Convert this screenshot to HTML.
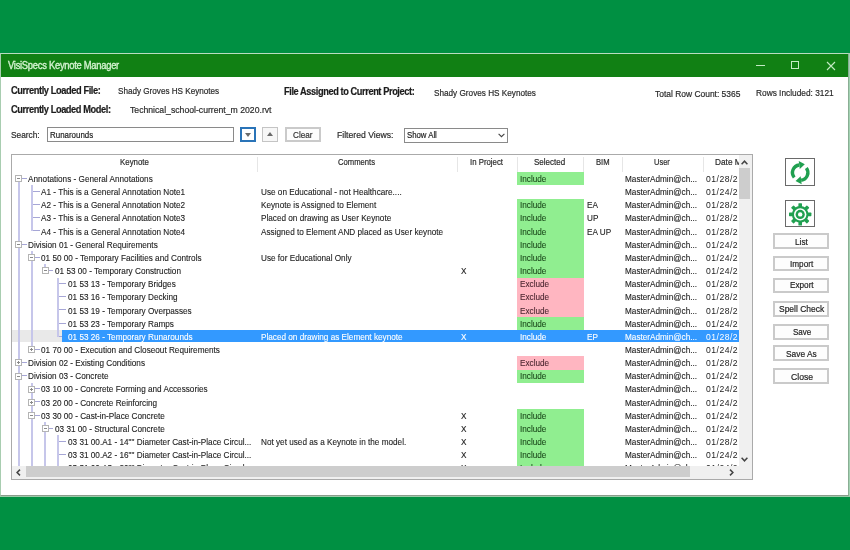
<!DOCTYPE html>
<html><head><meta charset="utf-8">
<style>
html,body{margin:0;padding:0}
body{width:850px;height:550px;overflow:hidden;background:#009042;position:relative;font-family:"Liberation Sans",sans-serif;color:#1a1a1a}
.a{position:absolute}
#win{position:absolute;left:0;top:53px;width:850px;height:443px;background:#fff}
#wb{position:absolute;left:0;top:53px;width:847px;height:441px;border:1px solid #b9dcc0;border-left-color:#a8cdb0;border-right:2px solid #8aae94;border-bottom:1px solid #8a9c8c}
#wb2{position:absolute;left:0;top:496px;width:850px;height:1px;background:#9ccaa8}
#title{position:absolute;left:1px;top:54px;width:847px;height:22.6px;background:#118014}
.tx{position:absolute;white-space:nowrap;line-height:13px;transform-origin:0 0;-webkit-text-stroke:.2px currentColor}
.t{position:absolute;white-space:nowrap;font-size:9.8px;line-height:13.15px;height:13.15px;transform:scaleX(.836);transform-origin:0 0;color:#222;-webkit-text-stroke:.12px currentColor}
.w{color:#fff}
.gi{color:#1c4a1c}
.pe{color:#4a2630}
.dt{transform:scaleX(.88);letter-spacing:.55px;-webkit-text-stroke:0}
.rb{position:absolute;left:12px;width:726.5px;height:12.3px}
.sel{background:linear-gradient(to right,#e9e9e9 0,#e9e9e9 50.2px,#3399ff 50.2px)}
.cb{position:absolute;height:13.2px}
.inc{background:#90ee90}
.exc{background:#ffb6c1}
.vl{position:absolute;width:2px;background:#c6c6ea}
.hl{position:absolute;height:1px;background:#a6a6d6}
.bx{position:absolute;width:7px;height:7px;box-sizing:border-box;border:1px solid #b4b4b4;background:#fff}
.bx .ph{position:absolute;left:1px;top:2px;width:3px;height:1px;background:#8a8a8a}
.bx .pv{position:absolute;left:2px;top:1px;width:1px;height:3px;background:#8a8a8a}
.bb{position:absolute;box-sizing:border-box;border:2px solid #cacaca;background:#fdfdfd}
#root{position:absolute;left:0;top:0;width:850px;height:550px;filter:blur(.3px)}
</style></head><body><div id="root">
<div id="win"></div>
<div id="wb"></div>
<div id="wb2"></div>
<div class="a" style="left:849px;top:53px;width:1px;height:443px;background:#a2d2b2"></div>
<div id="title"></div>
<!-- title buttons -->
<div class="a" style="left:755.5px;top:65px;width:9px;height:1px;background:#c4eac4"></div>
<div class="a" style="left:791px;top:61px;width:8px;height:8px;box-sizing:border-box;border:1px solid #c4eac4"></div>
<svg class="a" style="left:826px;top:61px" width="10" height="10" viewBox="0 0 10 10"><path d="M1 1L9 9M9 1L1 9" stroke="#c4eac4" stroke-width="1.1"/></svg>

<!-- search row controls -->
<div class="a" style="left:47.2px;top:127.2px;width:186.5px;height:15.3px;box-sizing:border-box;border:1px solid #8a8a8a;background:#fff"></div>
<div class="a" style="left:240px;top:127px;width:15.6px;height:15.4px;box-sizing:border-box;border:2px solid #2a74b8;background:#fff"></div>
<div class="a" style="left:244.5px;top:132.5px;width:0;height:0;border-left:3.5px solid transparent;border-right:3.5px solid transparent;border-top:4px solid #6a6a6a"></div>
<div class="a" style="left:262.4px;top:127px;width:15.8px;height:15.4px;box-sizing:border-box;border:1px solid #c4c4c4;background:#f7f7f7"></div>
<div class="a" style="left:266.8px;top:132px;width:0;height:0;border-left:3.5px solid transparent;border-right:3.5px solid transparent;border-bottom:4px solid #6a6a6a"></div>
<div class="bb" style="left:285.4px;top:126.8px;width:35.2px;height:15.7px"></div>
<div class="a" style="left:404.2px;top:127.5px;width:103.6px;height:15.4px;box-sizing:border-box;border:1px solid #8a8a8a;background:#fff"></div>
<svg class="a" style="left:497.5px;top:133.2px" width="7" height="5" viewBox="0 0 7 5"><path d="M0.6 0.8L3.5 3.7L6.4 0.8" fill="none" stroke="#444" stroke-width="1.1"/></svg>

<!-- grid -->
<div class="a" style="left:11px;top:154px;width:742px;height:326px;box-sizing:border-box;border:1px solid #aaaaaa;background:#fff"></div>
<div class="a" style="left:12px;top:155px;width:726.5px;height:310.5px;overflow:hidden">
<div class="a" style="left:-12px;top:-155px;width:850px;height:550px">
<div class="a" style="left:257.1px;top:157px;width:1px;height:15px;background:#e6e6e6"></div>
<div class="a" style="left:457.4px;top:157px;width:1px;height:15px;background:#e6e6e6"></div>
<div class="a" style="left:516.6px;top:157px;width:1px;height:15px;background:#e6e6e6"></div>
<div class="a" style="left:583.1px;top:157px;width:1px;height:15px;background:#e6e6e6"></div>
<div class="a" style="left:621.9px;top:157px;width:1px;height:15px;background:#e6e6e6"></div>
<div class="a" style="left:702.5px;top:157px;width:1px;height:15px;background:#e6e6e6"></div>
<div class="tx" style="left:714.6px;top:156.2px;font-size:9.3px;color:#2a2a2a;transform:scaleX(.89)">Date Modified</div>
<div class="cb inc" style="top:172.30px;left:517.1px;width:66.5px"></div>
<div class="hl" style="left:22px;top:178px;width:5px"></div>
<div class="t" style="left:28.2px;top:172.00px">Annotations - General Annotations</div>
<div class="t gi" style="left:520.2px;top:172.00px">Include</div>
<div class="t" style="left:625px;top:172.00px">MasterAdmin@ch...</div>
<div class="t dt" style="left:706.3px;top:172.00px">01/28/2</div>
<div class="hl" style="left:32px;top:191px;width:8px"></div>
<div class="t" style="left:41.4px;top:185.15px">A1 - This is a General Annotation Note1</div>
<div class="t" style="left:260.6px;top:185.15px">Use on Educational - not Healthcare....</div>
<div class="t" style="left:625px;top:185.15px">MasterAdmin@ch...</div>
<div class="t dt" style="left:706.3px;top:185.15px">01/24/2</div>
<div class="cb inc" style="top:198.60px;left:517.1px;width:66.5px"></div>
<div class="hl" style="left:32px;top:204px;width:8px"></div>
<div class="t" style="left:41.4px;top:198.30px">A2 - This is a General Annotation Note2</div>
<div class="t" style="left:260.6px;top:198.30px">Keynote is Assigned to Element</div>
<div class="t gi" style="left:520.2px;top:198.30px">Include</div>
<div class="t" style="left:587px;top:198.30px">EA</div>
<div class="t" style="left:625px;top:198.30px">MasterAdmin@ch...</div>
<div class="t dt" style="left:706.3px;top:198.30px">01/28/2</div>
<div class="cb inc" style="top:211.75px;left:517.1px;width:66.5px"></div>
<div class="hl" style="left:32px;top:217px;width:8px"></div>
<div class="t" style="left:41.4px;top:211.45px">A3 - This is a General Annotation Note3</div>
<div class="t" style="left:260.6px;top:211.45px">Placed on drawing as User Keynote</div>
<div class="t gi" style="left:520.2px;top:211.45px">Include</div>
<div class="t" style="left:587px;top:211.45px">UP</div>
<div class="t" style="left:625px;top:211.45px">MasterAdmin@ch...</div>
<div class="t dt" style="left:706.3px;top:211.45px">01/28/2</div>
<div class="cb inc" style="top:224.90px;left:517.1px;width:66.5px"></div>
<div class="hl" style="left:32px;top:230px;width:8px"></div>
<div class="t" style="left:41.4px;top:224.60px">A4 - This is a General Annotation Note4</div>
<div class="t" style="left:260.6px;top:224.60px">Assigned to Element AND placed as User keynote</div>
<div class="t gi" style="left:520.2px;top:224.60px">Include</div>
<div class="t" style="left:587px;top:224.60px">EA UP</div>
<div class="t" style="left:625px;top:224.60px">MasterAdmin@ch...</div>
<div class="t dt" style="left:706.3px;top:224.60px">01/28/2</div>
<div class="cb inc" style="top:238.05px;left:517.1px;width:66.5px"></div>
<div class="hl" style="left:22px;top:244px;width:5px"></div>
<div class="t" style="left:28.2px;top:237.75px">Division 01 - General Requirements</div>
<div class="t gi" style="left:520.2px;top:237.75px">Include</div>
<div class="t" style="left:625px;top:237.75px">MasterAdmin@ch...</div>
<div class="t dt" style="left:706.3px;top:237.75px">01/24/2</div>
<div class="cb inc" style="top:251.20px;left:517.1px;width:66.5px"></div>
<div class="hl" style="left:35px;top:257px;width:5px"></div>
<div class="t" style="left:41.4px;top:250.90px">01 50 00 - Temporary Facilities and Controls</div>
<div class="t" style="left:260.6px;top:250.90px">Use for Educational Only</div>
<div class="t gi" style="left:520.2px;top:250.90px">Include</div>
<div class="t" style="left:625px;top:250.90px">MasterAdmin@ch...</div>
<div class="t dt" style="left:706.3px;top:250.90px">01/24/2</div>
<div class="cb inc" style="top:264.35px;left:517.1px;width:66.5px"></div>
<div class="hl" style="left:48px;top:270px;width:5px"></div>
<div class="t" style="left:54.6px;top:264.05px">01 53 00 - Temporary Construction</div>
<div class="t" style="left:460.5px;top:264.05px">X</div>
<div class="t gi" style="left:520.2px;top:264.05px">Include</div>
<div class="t" style="left:625px;top:264.05px">MasterAdmin@ch...</div>
<div class="t dt" style="left:706.3px;top:264.05px">01/24/2</div>
<div class="cb exc" style="top:277.50px;left:517.1px;width:66.5px"></div>
<div class="hl" style="left:58px;top:283px;width:8px"></div>
<div class="t" style="left:67.8px;top:277.20px">01 53 13 - Temporary Bridges</div>
<div class="t pe" style="left:520.2px;top:277.20px">Exclude</div>
<div class="t" style="left:625px;top:277.20px">MasterAdmin@ch...</div>
<div class="t dt" style="left:706.3px;top:277.20px">01/28/2</div>
<div class="cb exc" style="top:290.65px;left:517.1px;width:66.5px"></div>
<div class="hl" style="left:58px;top:296px;width:8px"></div>
<div class="t" style="left:67.8px;top:290.35px">01 53 16 - Temporary Decking</div>
<div class="t pe" style="left:520.2px;top:290.35px">Exclude</div>
<div class="t" style="left:625px;top:290.35px">MasterAdmin@ch...</div>
<div class="t dt" style="left:706.3px;top:290.35px">01/28/2</div>
<div class="cb exc" style="top:303.80px;left:517.1px;width:66.5px"></div>
<div class="hl" style="left:58px;top:309px;width:8px"></div>
<div class="t" style="left:67.8px;top:303.50px">01 53 19 - Temporary Overpasses</div>
<div class="t pe" style="left:520.2px;top:303.50px">Exclude</div>
<div class="t" style="left:625px;top:303.50px">MasterAdmin@ch...</div>
<div class="t dt" style="left:706.3px;top:303.50px">01/28/2</div>
<div class="cb inc" style="top:316.95px;left:517.1px;width:66.5px"></div>
<div class="hl" style="left:58px;top:323px;width:8px"></div>
<div class="t" style="left:67.8px;top:316.65px">01 53 23 - Temporary Ramps</div>
<div class="t gi" style="left:520.2px;top:316.65px">Include</div>
<div class="t" style="left:625px;top:316.65px">MasterAdmin@ch...</div>
<div class="t dt" style="left:706.3px;top:316.65px">01/24/2</div>
<div class="rb sel" style="top:330.10px"></div>
<div class="hl" style="left:58px;top:336px;width:4px"></div>
<div class="t w" style="left:67.8px;top:329.80px">01 53 26 - Temporary Runarounds</div>
<div class="t w" style="left:260.6px;top:329.80px">Placed on drawing as Element keynote</div>
<div class="t w" style="left:460.5px;top:329.80px">X</div>
<div class="t w" style="left:520.2px;top:329.80px">Include</div>
<div class="t w" style="left:587px;top:329.80px">EP</div>
<div class="t w" style="left:625px;top:329.80px">MasterAdmin@ch...</div>
<div class="t w dt" style="left:706.3px;top:329.80px">01/28/2</div>
<div class="hl" style="left:35px;top:349px;width:5px"></div>
<div class="t" style="left:41.4px;top:342.95px">01 70 00 - Execution and Closeout Requirements</div>
<div class="t" style="left:625px;top:342.95px">MasterAdmin@ch...</div>
<div class="t dt" style="left:706.3px;top:342.95px">01/24/2</div>
<div class="cb exc" style="top:356.40px;left:517.1px;width:66.5px"></div>
<div class="hl" style="left:22px;top:362px;width:5px"></div>
<div class="t" style="left:28.2px;top:356.10px">Division 02 - Existing Conditions</div>
<div class="t pe" style="left:520.2px;top:356.10px">Exclude</div>
<div class="t" style="left:625px;top:356.10px">MasterAdmin@ch...</div>
<div class="t dt" style="left:706.3px;top:356.10px">01/28/2</div>
<div class="cb inc" style="top:369.55px;left:517.1px;width:66.5px"></div>
<div class="hl" style="left:22px;top:375px;width:5px"></div>
<div class="t" style="left:28.2px;top:369.25px">Division 03 - Concrete</div>
<div class="t gi" style="left:520.2px;top:369.25px">Include</div>
<div class="t" style="left:625px;top:369.25px">MasterAdmin@ch...</div>
<div class="t dt" style="left:706.3px;top:369.25px">01/24/2</div>
<div class="hl" style="left:35px;top:388px;width:5px"></div>
<div class="t" style="left:41.4px;top:382.40px">03 10 00 - Concrete Forming and Accessories</div>
<div class="t" style="left:625px;top:382.40px">MasterAdmin@ch...</div>
<div class="t dt" style="left:706.3px;top:382.40px">01/24/2</div>
<div class="hl" style="left:35px;top:401px;width:5px"></div>
<div class="t" style="left:41.4px;top:395.55px">03 20 00 - Concrete Reinforcing</div>
<div class="t" style="left:625px;top:395.55px">MasterAdmin@ch...</div>
<div class="t dt" style="left:706.3px;top:395.55px">01/24/2</div>
<div class="cb inc" style="top:409.00px;left:517.1px;width:66.5px"></div>
<div class="hl" style="left:35px;top:415px;width:5px"></div>
<div class="t" style="left:41.4px;top:408.70px">03 30 00 - Cast-in-Place Concrete</div>
<div class="t" style="left:460.5px;top:408.70px">X</div>
<div class="t gi" style="left:520.2px;top:408.70px">Include</div>
<div class="t" style="left:625px;top:408.70px">MasterAdmin@ch...</div>
<div class="t dt" style="left:706.3px;top:408.70px">01/24/2</div>
<div class="cb inc" style="top:422.15px;left:517.1px;width:66.5px"></div>
<div class="hl" style="left:48px;top:428px;width:5px"></div>
<div class="t" style="left:54.6px;top:421.85px">03 31 00 - Structural Concrete</div>
<div class="t" style="left:460.5px;top:421.85px">X</div>
<div class="t gi" style="left:520.2px;top:421.85px">Include</div>
<div class="t" style="left:625px;top:421.85px">MasterAdmin@ch...</div>
<div class="t dt" style="left:706.3px;top:421.85px">01/24/2</div>
<div class="cb inc" style="top:435.30px;left:517.1px;width:66.5px"></div>
<div class="hl" style="left:58px;top:441px;width:8px"></div>
<div class="t" style="left:67.8px;top:435.00px">03 31 00.A1 - 14&quot;&quot; Diameter Cast-in-Place Circul...</div>
<div class="t" style="left:260.6px;top:435.00px">Not yet used as a Keynote in the model.</div>
<div class="t" style="left:460.5px;top:435.00px">X</div>
<div class="t gi" style="left:520.2px;top:435.00px">Include</div>
<div class="t" style="left:625px;top:435.00px">MasterAdmin@ch...</div>
<div class="t dt" style="left:706.3px;top:435.00px">01/28/2</div>
<div class="cb inc" style="top:448.45px;left:517.1px;width:66.5px"></div>
<div class="hl" style="left:58px;top:454px;width:8px"></div>
<div class="t" style="left:67.8px;top:448.15px">03 31 00.A2 - 16&quot;&quot; Diameter Cast-in-Place Circul...</div>
<div class="t" style="left:460.5px;top:448.15px">X</div>
<div class="t gi" style="left:520.2px;top:448.15px">Include</div>
<div class="t" style="left:625px;top:448.15px">MasterAdmin@ch...</div>
<div class="t dt" style="left:706.3px;top:448.15px">01/24/2</div>
<div class="cb inc" style="top:461.60px;left:517.1px;width:66.5px"></div>
<div class="hl" style="left:58px;top:467px;width:8px"></div>
<div class="t" style="left:67.8px;top:461.30px">03 31 00.A3 - 20&quot;&quot; Diameter Cast-in-Place Circul...</div>
<div class="t" style="left:460.5px;top:461.30px">X</div>
<div class="t gi" style="left:520.2px;top:461.30px">Include</div>
<div class="t" style="left:625px;top:461.30px">MasterAdmin@ch...</div>
<div class="t dt" style="left:706.3px;top:461.30px">01/24/2</div>
<div class="cb inc" style="top:474.75px;left:517.1px;width:66.5px"></div>
<div class="hl" style="left:58px;top:480px;width:8px"></div>
<div class="t" style="left:67.8px;top:474.45px">03 31 00.A4 - 24&quot;&quot; Diameter Cast-in-Place Circul...</div>
<div class="t" style="left:460.5px;top:474.45px">X</div>
<div class="t gi" style="left:520.2px;top:474.45px">Include</div>
<div class="t" style="left:625px;top:474.45px">MasterAdmin@ch...</div>
<div class="t dt" style="left:706.3px;top:474.45px">01/24/2</div>
<div class="vl" style="left:18px;top:179px;height:309px"></div>
<div class="vl" style="left:31px;top:185px;height:46px"></div>
<div class="vl" style="left:31px;top:251px;height:99px"></div>
<div class="vl" style="left:31px;top:383px;height:105px"></div>
<div class="vl" style="left:44px;top:264px;height:7px"></div>
<div class="vl" style="left:44px;top:422px;height:66px"></div>
<div class="vl" style="left:57px;top:278px;height:59px"></div>
<div class="vl" style="left:57px;top:435px;height:53px"></div>
<div class="bx" style="left:15.1px;top:175.38px"><i class="ph"></i></div>
<div class="bx" style="left:15.1px;top:241.12px"><i class="ph"></i></div>
<div class="bx" style="left:28.3px;top:254.28px"><i class="ph"></i></div>
<div class="bx" style="left:41.5px;top:267.43px"><i class="ph"></i></div>
<div class="bx" style="left:28.3px;top:346.32px"><i class="ph"></i><i class="pv"></i></div>
<div class="bx" style="left:15.1px;top:359.47px"><i class="ph"></i><i class="pv"></i></div>
<div class="bx" style="left:15.1px;top:372.62px"><i class="ph"></i></div>
<div class="bx" style="left:28.3px;top:385.78px"><i class="ph"></i><i class="pv"></i></div>
<div class="bx" style="left:28.3px;top:398.93px"><i class="ph"></i><i class="pv"></i></div>
<div class="bx" style="left:28.3px;top:412.07px"><i class="ph"></i></div>
<div class="bx" style="left:41.5px;top:425.22px"><i class="ph"></i></div>
</div></div>
<!-- vertical scrollbar -->
<div class="a" style="left:738.5px;top:155px;width:13.5px;height:324px;background:#f0f0f0"></div>
<div class="a" style="left:739.3px;top:168.2px;width:11px;height:31.3px;background:#cdcdcd"></div>
<svg class="a" style="left:741.2px;top:159.5px" width="7" height="5" viewBox="0 0 7 5"><path d="M0.6 4.2L3.5 1.2L6.4 4.2" fill="none" stroke="#444" stroke-width="1.5"/></svg>
<svg class="a" style="left:741.2px;top:456.5px" width="7" height="5" viewBox="0 0 7 5"><path d="M0.6 0.8L3.5 3.8L6.4 0.8" fill="none" stroke="#444" stroke-width="1.5"/></svg>
<!-- horizontal scrollbar -->
<div class="a" style="left:12px;top:465.5px;width:726.5px;height:13.5px;background:#f0f0f0"></div>
<div class="a" style="left:25.9px;top:466.4px;width:664.5px;height:10.8px;background:#cdcdcd"></div>
<svg class="a" style="left:16.3px;top:468.8px" width="5" height="7" viewBox="0 0 5 7"><path d="M4 0.6L1.1 3.5L4 6.4" fill="none" stroke="#444" stroke-width="1.5"/></svg>
<svg class="a" style="left:729.2px;top:468.8px" width="5" height="7" viewBox="0 0 5 7"><path d="M1 0.6L3.9 3.5L1 6.4" fill="none" stroke="#444" stroke-width="1.5"/></svg>

<!-- right icon buttons -->
<div class="a" style="left:785.2px;top:158.3px;width:29.5px;height:27.7px;box-sizing:border-box;border:1px solid #6a6a6a;background:#fff"></div>
<svg class="a" style="left:785px;top:158px" width="30" height="28" viewBox="0 0 30 28">
<path d="M9.22 19.45A7.7 7.7 0 0 1 14.26 6.96" fill="none" stroke="#20a050" stroke-width="3.4"/>
<path d="M14.76 11.03L13.76 2.89L19.82 6.27Z" fill="#20a050"/>
<path d="M21.35 9.97A7.7 7.7 0 0 1 16.14 22.24" fill="none" stroke="#20a050" stroke-width="3.4"/>
<path d="M15.64 18.17L16.64 26.31L10.58 22.93Z" fill="#20a050"/>
</svg>
<div class="a" style="left:785.2px;top:200.3px;width:29.5px;height:27.1px;box-sizing:border-box;border:1px solid #6a6a6a;background:#fff"></div>
<svg class="a" style="left:785px;top:200px" width="30" height="28" viewBox="0 0 30 28">
<g fill="#20a050"><rect x="13.40" y="3.20" width="3.6" height="5" rx="0.6" transform="rotate(0 15.2 14.4)"/><rect x="13.40" y="3.20" width="3.6" height="5" rx="0.6" transform="rotate(45 15.2 14.4)"/><rect x="13.40" y="3.20" width="3.6" height="5" rx="0.6" transform="rotate(90 15.2 14.4)"/><rect x="13.40" y="3.20" width="3.6" height="5" rx="0.6" transform="rotate(135 15.2 14.4)"/><rect x="13.40" y="3.20" width="3.6" height="5" rx="0.6" transform="rotate(180 15.2 14.4)"/><rect x="13.40" y="3.20" width="3.6" height="5" rx="0.6" transform="rotate(225 15.2 14.4)"/><rect x="13.40" y="3.20" width="3.6" height="5" rx="0.6" transform="rotate(270 15.2 14.4)"/><rect x="13.40" y="3.20" width="3.6" height="5" rx="0.6" transform="rotate(315 15.2 14.4)"/><circle cx="15.2" cy="14.4" r="8.3"/></g>
<circle cx="15.2" cy="14.4" r="6.2" fill="#fff"/>
<circle cx="15.2" cy="14.4" r="4.6" fill="#20a050"/>
<circle cx="15.2" cy="14.4" r="2.2" fill="#fff"/>
</svg>
<div class="bb" style="left:772.9px;top:233.4px;width:55.9px;height:15.8px"></div>
<div class="bb" style="left:772.9px;top:255.8px;width:55.9px;height:15.6px"></div>
<div class="bb" style="left:772.9px;top:277.5px;width:55.9px;height:15.7px"></div>
<div class="bb" style="left:773.3px;top:301.4px;width:56.1px;height:16.1px"></div>
<div class="bb" style="left:773.2px;top:323.8px;width:56.1px;height:15.9px"></div>
<div class="bb" style="left:773.2px;top:345.4px;width:56.1px;height:15.9px"></div>
<div class="bb" style="left:773.2px;top:368.3px;width:56.1px;height:15.9px"></div>
<div class="tx" style="left:7.90px;top:59.40px;font-size:10.4px;letter-spacing:-0.3px;-webkit-text-stroke:.35px currentColor;color:#d4f2d0;transform:scaleX(0.9033)">VisiSpecs Keynote Manager</div>
<div class="tx" style="left:10.90px;top:83.70px;font-size:10.4px;font-weight:bold;letter-spacing:-0.45px;color:#1c1c1c;transform:scaleX(0.8910)">Currently Loaded File:</div>
<div class="tx" style="left:118.30px;top:84.41px;font-size:9.5px;color:#2a2a2a;transform:scaleX(0.8551)">Shady Groves HS Keynotes</div>
<div class="tx" style="left:284.20px;top:84.70px;font-size:10.4px;font-weight:bold;letter-spacing:-0.45px;color:#1c1c1c;transform:scaleX(0.8864)">File Assigned to Current Project:</div>
<div class="tx" style="left:434.10px;top:85.71px;font-size:9.5px;color:#2a2a2a;transform:scaleX(0.8619)">Shady Groves HS Keynotes</div>
<div class="tx" style="left:655.10px;top:86.61px;font-size:9.5px;color:#2a2a2a;transform:scaleX(0.8885)">Total Row Count: 5365</div>
<div class="tx" style="left:755.60px;top:86.21px;font-size:9.5px;color:#2a2a2a;transform:scaleX(0.8753)">Rows Included: 3121</div>
<div class="tx" style="left:11.20px;top:102.50px;font-size:10.4px;font-weight:bold;letter-spacing:-0.45px;color:#1c1c1c;transform:scaleX(0.8893)">Currently Loaded Model:</div>
<div class="tx" style="left:129.50px;top:102.61px;font-size:9.5px;color:#2a2a2a;transform:scaleX(0.9115)">Technical_school-current_m 2020.rvt</div>
<div class="tx" style="left:10.60px;top:128.01px;font-size:9.5px;color:#2a2a2a;transform:scaleX(0.8750)">Search:</div>
<div class="tx" style="left:50.40px;top:128.01px;font-size:9.5px;color:#1c1c1c;transform:scaleX(0.8346)">Runarounds</div>
<div class="tx" style="left:293.00px;top:127.61px;font-size:9.5px;color:#333;transform:scaleX(0.8565)">Clear</div>
<div class="tx" style="left:337.20px;top:127.61px;font-size:9.5px;color:#2a2a2a;transform:scaleX(0.9081)">Filtered Views:</div>
<div class="tx" style="left:407.10px;top:127.81px;font-size:9.5px;color:#1c1c1c;transform:scaleX(0.8189)">Show All</div>
<div class="tx" style="left:119.70px;top:156.18px;font-size:9.3px;color:#2a2a2a;transform:scaleX(0.8471)">Keynote</div>
<div class="tx" style="left:338.20px;top:156.18px;font-size:9.3px;color:#2a2a2a;transform:scaleX(0.8222)">Comments</div>
<div class="tx" style="left:470.20px;top:156.18px;font-size:9.3px;color:#2a2a2a;transform:scaleX(0.8400)">In Project</div>
<div class="tx" style="left:533.80px;top:156.18px;font-size:9.3px;color:#2a2a2a;transform:scaleX(0.8611)">Selected</div>
<div class="tx" style="left:595.80px;top:156.18px;font-size:9.3px;color:#2a2a2a;transform:scaleX(0.8235)">BIM</div>
<div class="tx" style="left:653.80px;top:156.18px;font-size:9.3px;color:#2a2a2a;transform:scaleX(0.8050)">User</div>
<div class="tx" style="left:794.80px;top:234.61px;font-size:9.5px;color:#222;transform:scaleX(0.8733)">List</div>
<div class="tx" style="left:789.50px;top:256.81px;font-size:9.5px;color:#222;transform:scaleX(0.8630)">Import</div>
<div class="tx" style="left:789.50px;top:278.41px;font-size:9.5px;color:#222;transform:scaleX(0.8607)">Export</div>
<div class="tx" style="left:779.20px;top:301.81px;font-size:9.5px;color:#222;transform:scaleX(0.8902)">Spell Check</div>
<div class="tx" style="left:792.50px;top:324.81px;font-size:9.5px;color:#222;transform:scaleX(0.8455)">Save</div>
<div class="tx" style="left:786.10px;top:346.51px;font-size:9.5px;color:#222;transform:scaleX(0.8800)">Save As</div>
<div class="tx" style="left:790.60px;top:370.01px;font-size:9.5px;color:#222;transform:scaleX(0.9083)">Close</div>
</div></body></html>
